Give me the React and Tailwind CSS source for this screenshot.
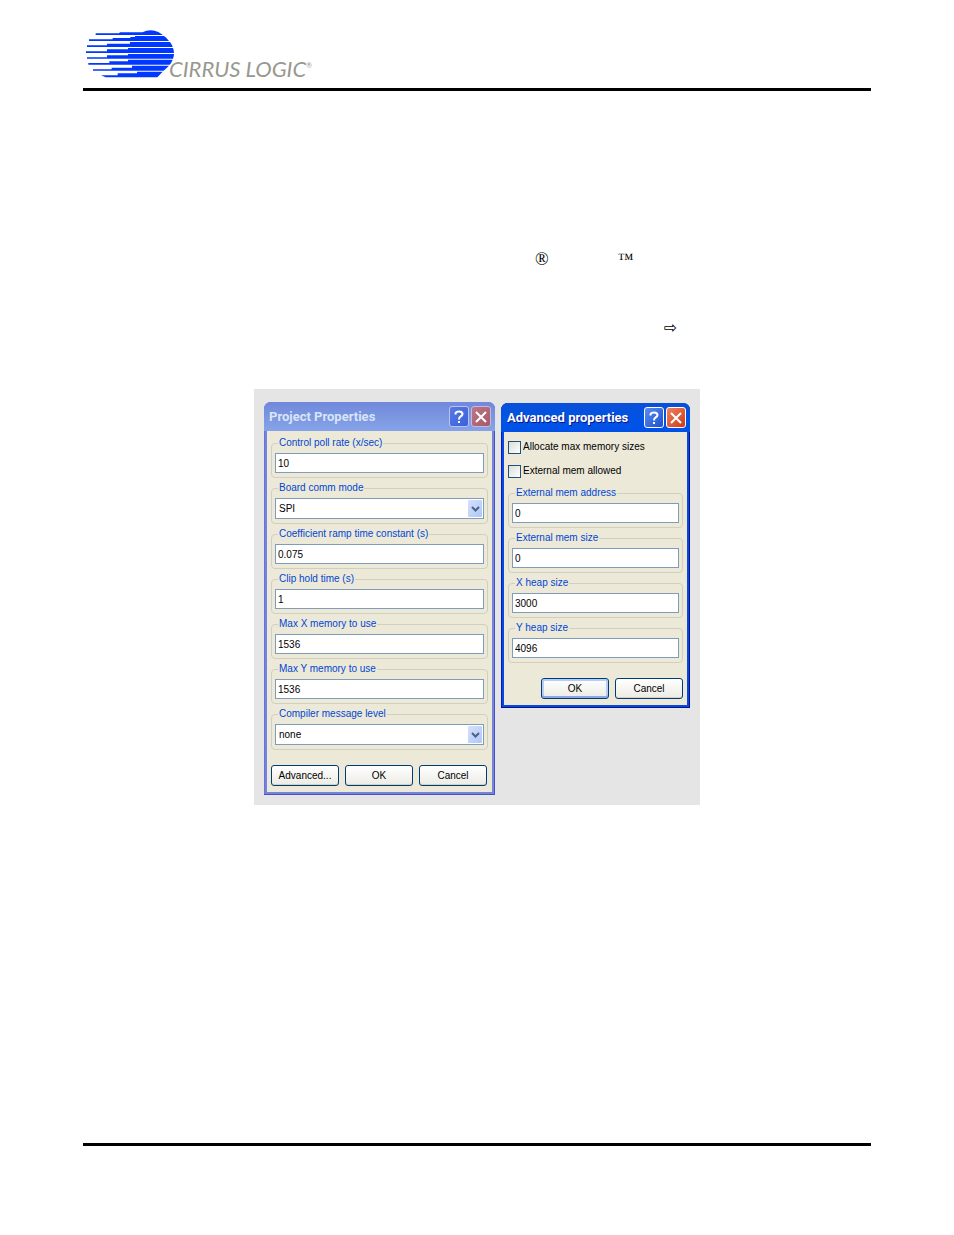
import React from "react";

const FONT = "font-['Liberation_Sans',sans-serif] text-[10px] leading-[14px]";

const projectFields = [
  { id: "poll", label: "Control poll rate (x/sec)", value: "10" },
  { id: "comm", label: "Board comm mode", value: "SPI", options: ["SPI", "I2C"] },
  { id: "ramp", label: "Coefficient ramp time constant (s)", value: "0.075" },
  { id: "clip", label: "Clip hold time (s)", value: "1" },
  { id: "maxx", label: "Max X memory to use", value: "1536" },
  { id: "maxy", label: "Max Y memory to use", value: "1536" },
  { id: "level", label: "Compiler message level", value: "none", options: ["none", "all"] },
];

const advancedFields = [
  { id: "addr", label: "External mem address", value: "0" },
  { id: "size", label: "External mem size", value: "0" },
  { id: "xheap", label: "X heap size", value: "3000" },
  { id: "yheap", label: "Y heap size", value: "4096" },
];

// striped cloud, one path per stripe
function CloudMark() {
  return (
    <svg viewBox="33 32 264 144" className="h-[48px] w-[88px] shrink-0" aria-hidden="true">
      <g fill="#0038ff">
        <path d="M62 42H131L136 39H202Q226 27 250 38L264 47H62Z" />
        <path d="M42 60H113V56H166V53H180V50H267Q277 57 282 65H42Z" />
        <path d="M36 78H96V73H165V68H285Q291 76 293 83H36Z" />
        <path d="M33 96H96V90H159V86H294Q297 93 297 101H33Z" />
        <path d="M36 114H96V108H159V104H297Q297 112 294 118H36Z" />
        <path d="M40 131H103V126H159V121H293Q289 131 284 136H40Z" />
        <path d="M54 150H110V145H171V139H282L266 154H54Z" />
        <path d="M78 168H128V162H186V157H263L247 174H92Z" />
      </g>
    </svg>
  );
}

function HelpIcon() {
  return (
    <svg viewBox="0 0 16 16" className="h-4 w-4 shrink-0" fill="none" stroke="currentColor" strokeWidth="2">
      <path d="M4.500 5.500V4.500Q5 2.500 8 2.500Q11.500 2.500 11.500 5Q11.500 6.500 9.500 7.500Q8 8.500 8 10.500M8 12V14" />
    </svg>
  );
}

function CloseIcon() {
  return (
    <svg viewBox="0 0 16 16" className="h-4 w-4 shrink-0" fill="none" stroke="currentColor" strokeWidth="2">
      <path d="M3 3L13 13M13 3L3 13" />
    </svg>
  );
}

function Field({ field }) {
  return (
    <fieldset className="relative rounded-[4px] border border-[#d0d0bf] px-[3px] pt-[3px] pb-1">
      <legend className="ml-[3px] px-[1px] text-[#0046d5]">
        <label htmlFor={field.id}>{field.label}</label>
      </legend>
      {field.options ? (
        <div className="relative">
          <select
            id={field.id}
            defaultValue={field.value}
            className="block h-[21px] w-full appearance-none rounded-none border border-[#7f9db9] bg-white px-[3px] text-black outline-none"
          >
            {field.options.map((o) => (
              <option key={o}>{o}</option>
            ))}
          </select>
          <span className="pointer-events-none absolute top-[2px] right-[2px] flex h-[17px] w-[14px] items-center justify-center rounded-[1px] bg-linear-to-br from-[#d5e1fd] to-[#aec6f6]">
            <svg viewBox="0 0 9 6" className="h-[6px] w-[9px]" fill="none" stroke="#4d6185" strokeWidth="2">
              <path d="M1 1L4.500 4.500L8 1" />
            </svg>
          </span>
        </div>
      ) : (
        <input
          id={field.id}
          type="text"
          defaultValue={field.value}
          className="block h-5 w-full rounded-none border border-[#7f9db9] bg-white px-[2px] text-black outline-none"
        />
      )}
    </fieldset>
  );
}

function PushButton({ children, primary }) {
  return (
    <button
      type="button"
      className={
        "h-[21px] w-[68px] shrink-0 rounded-[3px] border border-[#003c74] bg-linear-to-b from-white to-[#ecebe5] text-center text-black " +
        (primary
          ? "shadow-[inset_0_-2px_0_#8aa8e8,inset_0_0_0_2px_#b8cdf5]"
          : "shadow-[inset_0_-1px_0_#d6d0c5]")
      }
    >
      {children}
    </button>
  );
}

function Dialog({ title, active, className, children }) {
  return (
    <section
      className={
        "flex flex-col rounded-t-[7px] " + className +
        (active
          ? " bg-[#0848e0] shadow-[inset_-1px_-1px_0_#00138c,inset_1px_0_0_#0019cf]"
          : " bg-[#7484dc] shadow-[inset_-1px_-1px_0_#4a52c0,inset_1px_0_0_#6872d8]")
      }
    >
      <header
        className={
          "flex h-[29px] items-center gap-[2px] rounded-t-[7px] pr-1 " +
          (active
            ? "bg-linear-to-b from-[#0a4fd8] via-[#0054e3] to-[#0050e8] pl-[6px] text-white"
            : "bg-linear-to-b from-[#7288dc] via-[#7a96df] to-[#86a3ea] pl-[5px] text-[#d8e4f8]")
        }
      >
        <h2
          className={
            "grow font-[Roboto,sans-serif] text-[13px] leading-[16px] font-bold " +
            (active ? "[text-shadow:1px_1px_0_#0f1089]" : "")
          }
        >
          {title}
        </h2>
        <button
          type="button"
          aria-label="Help"
          className={
            "flex h-[21px] w-5 items-center justify-center rounded-[3px] border text-white " +
            (active
              ? "border-white bg-linear-to-br from-[#5c8cf0] to-[#1c50d0]"
              : "border-[#b4c4f4] bg-linear-to-br from-[#5878e4] to-[#3c60dc]")
          }
        >
          <HelpIcon />
        </button>
        <button
          type="button"
          aria-label="Close"
          className={
            "flex h-[21px] w-5 items-center justify-center rounded-[3px] border text-white " +
            (active
              ? "border-white bg-linear-to-br from-[#f08060] to-[#cc3810]"
              : "border-[#c8b8e0] bg-linear-to-br from-[#b87888] to-[#a85868]")
          }
        >
          <CloseIcon />
        </button>
      </header>
      <div className="mx-[3px] mb-[3px] flex grow flex-col bg-[#ece9d8]">{children}</div>
    </section>
  );
}

export default function App() {
  return (
    <main className="flex min-h-screen flex-col bg-white px-[83px] text-black">
      <header className="flex items-end border-b-[3px] border-black pt-[30px] pb-[10px] pl-[3px]">
        <CloudMark />
        <div className="-mb-[2px] -ml-[5px] flex items-start font-[Lato,sans-serif] text-[#98988e]">
          <span className="text-[22px] leading-[22px] italic">CIRRUS LOGIC</span>
          <span className="text-[7px] leading-[14px]">®</span>
        </div>
      </header>

      <div className="flex gap-[69px] pt-[158px] pl-[452px] font-['Liberation_Serif',serif] text-[18px] leading-[20px]">
        <span>®</span>
        <span className="text-[16px]">™</span>
      </div>
      <div className="pt-[50px] pl-[581px] font-['DejaVu_Sans',sans-serif] text-[16px] leading-[18px]">⇨</div>

      <div className={"mx-auto mt-[52px] flex items-start gap-[6px] bg-[#e5e5e5] px-[10px] pt-[13px] pb-[10px] " + FONT}>
        <Dialog title="Project Properties" className="w-[231px]">
          <div className="flex flex-col gap-[3px] px-1 pt-[5px]">
            {projectFields.map((f) => (
              <Field key={f.id} field={f} />
            ))}
          </div>
          <div className="flex justify-end gap-[6px] pt-[15px] pr-[5px] pb-[6px]">
            <PushButton>Advanced...</PushButton>
            <PushButton>OK</PushButton>
            <PushButton>Cancel</PushButton>
          </div>
        </Dialog>

        <Dialog title="Advanced properties" active className="mt-[1px] w-[189px]">
          <div className="flex flex-col gap-[10px] px-1 pt-2">
            {["Allocate max memory sizes", "External mem allowed"].map((text) => (
              <label key={text} className="flex items-center gap-[2px]">
                <input
                  type="checkbox"
                  className="h-[13px] w-[13px] appearance-none border border-[#1c5180] bg-linear-to-br from-[#dcdcd7] to-white"
                />
                {text}
              </label>
            ))}
          </div>
          <div className="flex flex-col gap-[3px] px-1 pt-2">
            {advancedFields.map((f) => (
              <Field key={f.id} field={f} />
            ))}
          </div>
          <div className="flex justify-end gap-[6px] px-1 pt-[15px] pb-[6px]">
            <PushButton primary>OK</PushButton>
            <PushButton>Cancel</PushButton>
          </div>
        </Dialog>
      </div>

      <footer className="mt-auto mb-[89px] border-t-[3px] border-black" />
    </main>
  );
}
